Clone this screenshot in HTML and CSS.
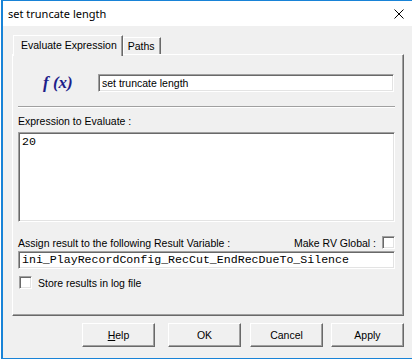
FILE: index.html
```html
<!DOCTYPE html>
<html>
<head>
    <meta charset="UTF-8">
    <title>set truncate length</title>
    <link rel="stylesheet" href="styles.css">
</head>
<body>
    <div class="window">
        <div class="titlebar">
            <span class="title">set truncate length</span>
            <svg class="close" width="10" height="10" viewBox="0 0 10 10">
                <path d="M0.5 0.5L9.5 9.5M9.5 0.5L0.5 9.5" stroke="#000" stroke-width="1" fill="none"/>
            </svg>
        </div>
        <div class="client">
            <div class="tabs">
                <div class="tab active">Evaluate Expression</div>
                <div class="tab">Paths</div>
            </div>
            <div class="panel">
                <div class="fxRow">
                    <span class="fx">f (x)</span>
                    <div class="field fxInput">set truncate length</div>
                </div>
                <div class="separator"></div>
                <div class="label exprLabel">Expression to Evaluate :</div>
                <div class="field expression mono">20</div>
                <div class="assignRow">
                    <span>Assign result to the following Result Variable :</span>
                    <span class="global">Make RV Global :<span class="checkbox"></span></span>
                </div>
                <div class="field result mono">ini_PlayRecordConfig_RecCut_EndRecDueTo_Silence</div>
                <div class="storeRow"><span class="checkbox"></span>Store results in log file</div>
            </div>
            <div class="buttons">
                <button class="btn help"><u>H</u>elp</button>
                <button class="btn ok">OK</button>
                <button class="btn cancel">Cancel</button>
                <button class="btn">Apply</button>
            </div>
        </div>
    </div>
</body>
</html>
```

FILE: styles.css
```css
* {
    box-sizing: border-box;
}
body {
    margin: 0;
    background: #ffffff;
    font-family: "Liberation Sans", Arial, sans-serif;
    font-size: 10.5px;
    color: #000000;
    overflow: hidden;
}
.window {
    margin-left: 1px;
    width: 411px;
    height: 359px;
    border-left: 2px solid #1883d7;
    border-top: 1px solid #1883d7;
    border-bottom: 1px solid #1883d7;
    display: flex;
    flex-direction: column;
}
.titlebar {
    height: 25px;
    background: #ffffff;
    display: flex;
    align-items: center;
    padding: 0 8px 1px 5px;
}
.title {
    font-family: "Noto Sans", sans-serif;
    font-size: 11px;
}
.close {
    margin-left: auto;
    margin-top: 1px;
}
.client {
    flex: 1;
    background: #f0f0f0;
    padding: 9px 0 0 9px;
}
.tabs {
    display: flex;
    align-items: flex-start;
    height: 19px;
    padding-left: 1px;
}
.tab {
    height: 17px;
    margin-top: 2px;
    padding: 2px 5px 0 4px;
    border-top: 1px solid #ffffff;
    border-left: 1px solid #ffffff;
    border-right: 1px solid #696969;
    box-shadow: inset -1px 0 #a0a0a0;
    background: #f0f0f0;
    line-height: 13px;
}
.tab.active {
    position: relative;
    z-index: 1;
    height: 21px;
    margin-top: 0;
    padding: 3px 5px 0 7px;
}
.panel {
    width: 392px;
    height: 262px;
    border-top: 1px solid #ffffff;
    border-left: 1px solid #ffffff;
    border-right: 1px solid #696969;
    border-bottom: 1px solid #696969;
    box-shadow: inset -1px -1px #a0a0a0;
    padding: 19px 8px 0 5px;
}
.fxRow {
    display: flex;
    align-items: center;
    height: 18px;
}
.fx {
    width: 80px;
    padding-left: 25px;
    font-family: "Liberation Serif", serif;
    font-weight: bold;
    font-style: italic;
    font-size: 17px;
    color: #1e1e8a;
}
.field {
    background: #ffffff;
    border-top: 1px solid #a0a0a0;
    border-left: 1px solid #a0a0a0;
    border-right: 1px solid #ffffff;
    border-bottom: 1px solid #ffffff;
    box-shadow: inset 1px 1px #696969, inset -1px -1px #e3e3e3;
}
.fxInput {
    width: 296px;
    height: 18px;
    padding: 2px 3px;
    line-height: 13px;
}
.separator {
    margin-top: 14px;
    height: 2px;
    border-top: 1px solid #a0a0a0;
    border-bottom: 1px solid #ffffff;
}
.exprLabel {
    margin-top: 7px;
    line-height: 13px;
}
.mono {
    font-family: "Liberation Mono", "Courier New", monospace;
    font-size: 11.6px;
    color: #000000;
}
.expression {
    margin-top: 4px;
    height: 90px;
    padding: 2px 3px;
    line-height: 14px;
}
.assignRow {
    display: flex;
    align-items: center;
    justify-content: space-between;
    margin-top: 14px;
    height: 13px;
}
.global {
    display: flex;
    align-items: center;
}
.checkbox {
    display: inline-block;
    width: 13px;
    height: 13px;
    background: #ffffff;
    border-top: 1px solid #a0a0a0;
    border-left: 1px solid #a0a0a0;
    border-right: 1px solid #ffffff;
    border-bottom: 1px solid #ffffff;
    box-shadow: inset 1px 1px #696969, inset -1px -1px #e3e3e3;
}
.global .checkbox {
    margin-left: 6px;
}
.result {
    margin-top: 2px;
    height: 18px;
    padding: 1px 3px;
    line-height: 14px;
}
.storeRow {
    display: flex;
    align-items: center;
    margin-top: 7px;
    height: 13px;
}
.storeRow .checkbox {
    margin: 0 6px 0 1px;
}
.buttons {
    display: flex;
    justify-content: flex-end;
    width: 392px;
    margin-top: 7px;
}
.btn {
    width: 73px;
    height: 24px;
    padding: 0;
    font-family: "Liberation Sans", Arial, sans-serif;
    font-size: 10.5px;
    color: #000000;
    background: #f0f0f0;
    border-top: 1px solid #ffffff;
    border-left: 1px solid #ffffff;
    border-right: 1px solid #696969;
    border-bottom: 1px solid #696969;
    box-shadow: inset -1px -1px #a0a0a0;
}
.help {
    margin-right: 13px;
}
.ok {
    margin-right: 9px;
}
.cancel {
    margin-right: 8px;
}
```
